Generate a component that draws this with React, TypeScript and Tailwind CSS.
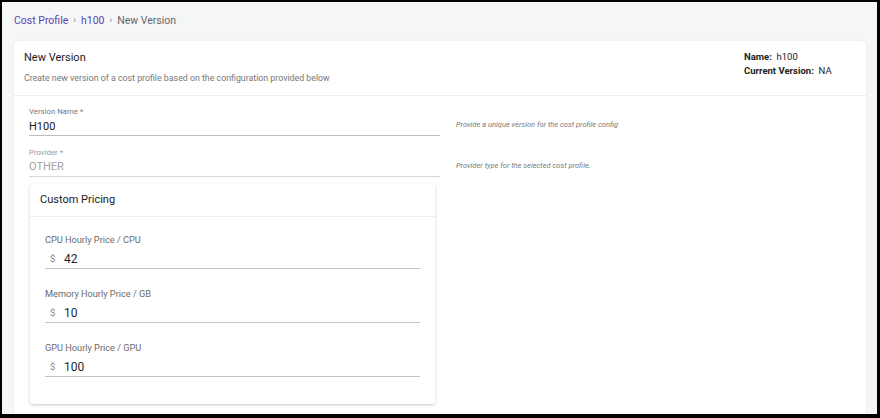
import React from "react";

const font = { fontFamily: "Roboto, 'Noto Sans', sans-serif" };

function PriceField({ label, value }: { label: string; value: string }) {
  return (
    <div>
      <div className="text-[9.2px] leading-[14px] text-[#6b6b6b]">{label}</div>
      <div className="mt-[3px] flex h-[19px] items-center border-b border-[#c4c4c4] pl-[5px]">
        <span className="w-[14px] text-[9.5px] text-[#8a8a8a]">$</span>
        <span className="text-[12px] text-[#1f1f1f]">{value}</span>
      </div>
    </div>
  );
}

export default function App() {
  return (
    <div
      style={font}
      className="h-[418px] w-[880px] overflow-hidden border-b-4 border-l-2 border-r-[3px] border-t-2 border-black bg-[#f5f6f8]"
    >
      <div className="flex h-[39px] items-center gap-[5px] pb-[2px] pl-[12px] text-[10.5px]">
        <span className="text-[#5c45ad]">Cost Profile</span>
        <span className="text-[9px] text-[#777]">›</span>
        <span className="text-[#5c45ad]">h100</span>
        <span className="text-[9px] text-[#777]">›</span>
        <span className="text-[#666]">New Version</span>
      </div>

      <div className="ml-[12px] h-[400px] w-[852px] rounded-t-[3px] bg-white shadow-[0_0_2px_rgba(0,0,0,0.08)]">
        <div className="flex h-[55px] justify-between border-b border-[#eeeeee] pl-[10px]">
          <div className="pt-[9px]">
            <div className="text-[11px] leading-[16px] text-[#1a1a1a]">New Version</div>
            <div className="mt-[5px] text-[8.8px] leading-[14px] text-[#777]">
              Create new version of a cost profile based on the configuration provided below
            </div>
          </div>
          <div className="w-[122px] pt-[9px] text-[9.5px] leading-[14px] text-[#222]">
            <div>
              <span className="font-bold">Name:</span>&nbsp; h100
            </div>
            <div>
              <span className="font-bold">Current Version:</span>&nbsp; NA
            </div>
          </div>
        </div>

        <div className="pl-[15px] pt-[10px]">
          <div className="flex items-end gap-[16px]">
            <div className="w-[411px] border-b border-[#bdbdbd]">
              <div className="text-[7.8px] leading-[12px] text-[#777]">Version Name *</div>
              <div className="h-[17px] pt-[1px] text-[11px] leading-[15px] text-[#1a1a1a]">H100</div>
            </div>
            <div className="pb-[5px] text-[7.5px] italic leading-[12px] text-[#7a7a7a]">
              Provide a unique version for the cost profile config
            </div>
          </div>

          <div className="mt-[11px] flex items-end gap-[16px]">
            <div className="w-[411px] border-b border-[#d6d6d6]">
              <div className="text-[7.8px] leading-[12px] text-[#9a9a9a]">Provider *</div>
              <div className="h-[17px] text-[11px] leading-[15px] text-[#a3a3a3]">OTHER</div>
            </div>
            <div className="pb-[5px] text-[7.5px] italic leading-[12px] text-[#7a7a7a]">
              Provider type for the selected cost profile.
            </div>
          </div>

          <div className="ml-[1px] mt-[7px] w-[405px] rounded-[3px] bg-white shadow-[0_1px_3px_rgba(0,0,0,0.22)]">
            <div className="flex h-[33px] items-center border-b border-[#eeeeee] pl-[10px] text-[11px] text-[#1a1a1a]">
              Custom Pricing
            </div>
            <div className="flex flex-col gap-[18px] px-[15px] pb-[27px] pt-[16px]">
              <PriceField label="CPU Hourly Price / CPU" value="42" />
              <PriceField label="Memory Hourly Price / GB" value="10" />
              <PriceField label="GPU Hourly Price / GPU" value="100" />
            </div>
          </div>
        </div>
      </div>
    </div>
  );
}
